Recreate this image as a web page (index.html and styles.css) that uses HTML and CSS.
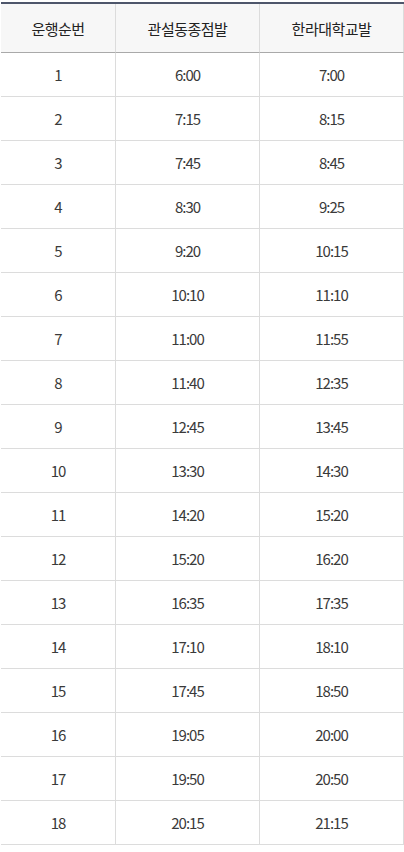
FILE: index.html
```html
<!DOCTYPE html>
<html lang="ko">
<head>
<meta charset="utf-8">
<title>운행시간표</title>
<link rel="stylesheet" href="styles.css">
</head>
<body>
<table class="timetable">
  <thead>
    <tr><th class="c1">운행순번</th><th class="c2">관설동종점발</th><th class="c3">한라대학교발</th></tr>
  </thead>
  <tbody>
    <tr><td class="c1">1</td><td class="c2">6:00</td><td class="c3">7:00</td></tr>
    <tr><td class="c1">2</td><td class="c2">7:15</td><td class="c3">8:15</td></tr>
    <tr><td class="c1">3</td><td class="c2">7:45</td><td class="c3">8:45</td></tr>
    <tr><td class="c1">4</td><td class="c2">8:30</td><td class="c3">9:25</td></tr>
    <tr><td class="c1">5</td><td class="c2">9:20</td><td class="c3">10:15</td></tr>
    <tr><td class="c1">6</td><td class="c2">10:10</td><td class="c3">11:10</td></tr>
    <tr><td class="c1">7</td><td class="c2">11:00</td><td class="c3">11:55</td></tr>
    <tr><td class="c1">8</td><td class="c2">11:40</td><td class="c3">12:35</td></tr>
    <tr><td class="c1">9</td><td class="c2">12:45</td><td class="c3">13:45</td></tr>
    <tr><td class="c1">10</td><td class="c2">13:30</td><td class="c3">14:30</td></tr>
    <tr><td class="c1">11</td><td class="c2">14:20</td><td class="c3">15:20</td></tr>
    <tr><td class="c1">12</td><td class="c2">15:20</td><td class="c3">16:20</td></tr>
    <tr><td class="c1">13</td><td class="c2">16:35</td><td class="c3">17:35</td></tr>
    <tr><td class="c1">14</td><td class="c2">17:10</td><td class="c3">18:10</td></tr>
    <tr><td class="c1">15</td><td class="c2">17:45</td><td class="c3">18:50</td></tr>
    <tr><td class="c1">16</td><td class="c2">19:05</td><td class="c3">20:00</td></tr>
    <tr><td class="c1">17</td><td class="c2">19:50</td><td class="c3">20:50</td></tr>
    <tr><td class="c1">18</td><td class="c2">20:15</td><td class="c3">21:15</td></tr>
  </tbody>
</table>
</body>
</html>
```

FILE: styles.css
```css
html, body {
  margin: 0;
  padding: 0;
  background: #fff;
}

.timetable {
  margin: 2px 0 0 1px;
  border-collapse: separate;
  border-spacing: 0;
  border-top: 2px solid #4e566b;
  table-layout: fixed;
  width: 403px;
  font-family: "Noto Sans CJK KR", "Noto Sans", sans-serif;
  font-feature-settings: "locl" 0;
  font-size: 15px;
  letter-spacing: -0.5px;
  text-align: center;
}

.timetable th,
.timetable td {
  padding: 0;
  box-sizing: border-box;
  vertical-align: middle;
  font-weight: 400;
}

.timetable th {
  height: 49px;
  background: #f7f7f7;
  color: #222;
  border-bottom: 1px solid #a9a9a9;
}

.timetable td {
  height: 44px;
  color: #3a3a3a;
  letter-spacing: -1px;
  border-bottom: 1px solid #dcdcdc;
}

.timetable .c1 { width: 114px; }
.timetable .c2 { width: 144px; border-left: 1px solid #dcdcdc; }
.timetable .c3 { width: 145px; border-left: 1px solid #dcdcdc; border-right: 1px solid #dcdcdc; }
```
